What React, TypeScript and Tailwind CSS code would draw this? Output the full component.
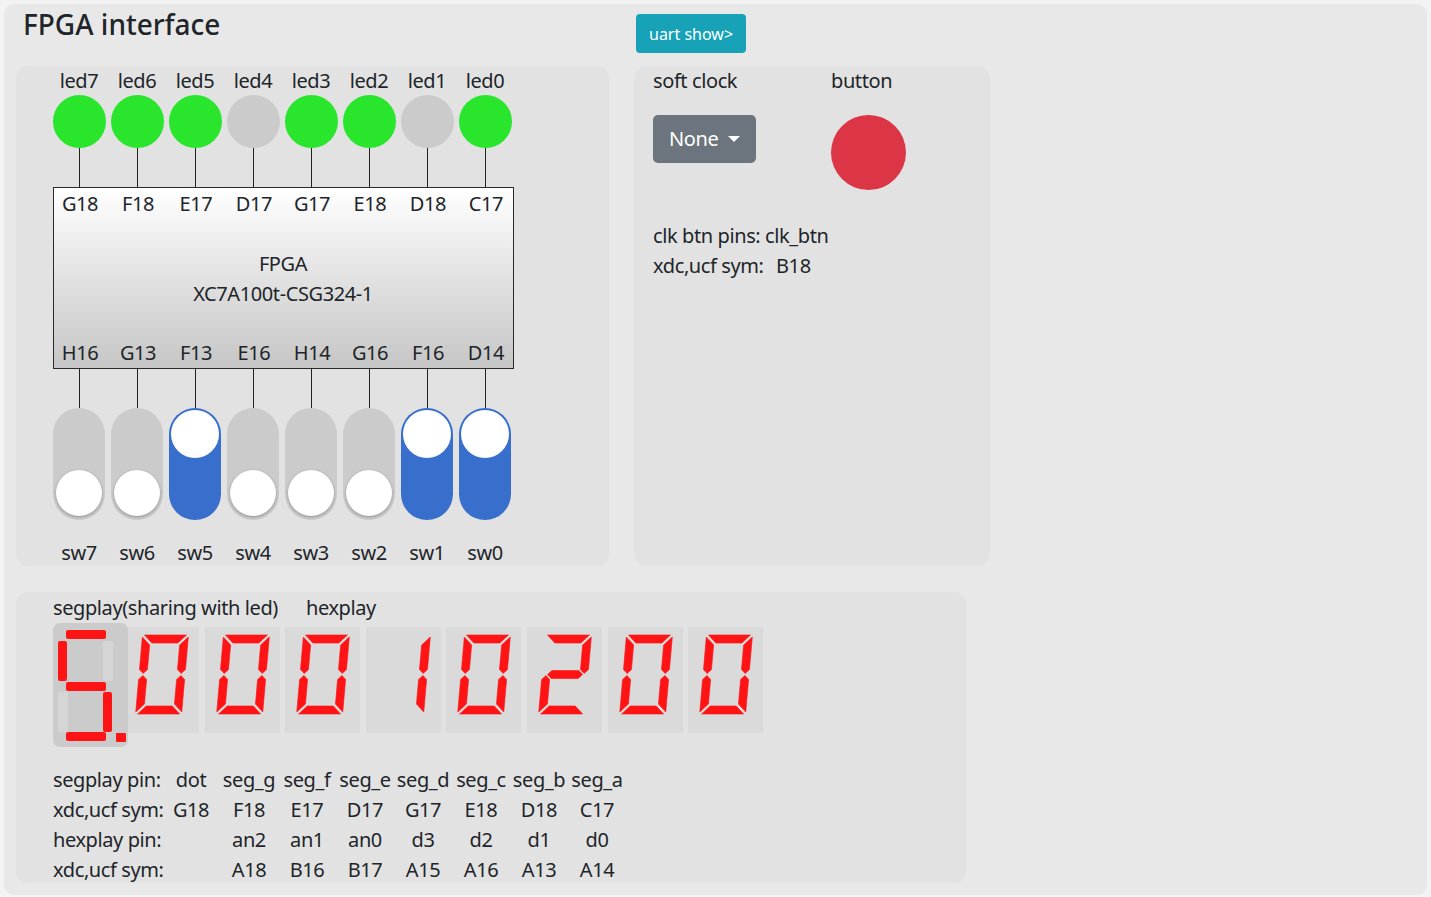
import React from 'react';

// led7 .. led0 / sw7 .. sw0, left to right as on the board
const LEDS = [1, 1, 1, 0, 1, 1, 0, 1];
const SWITCHES = [0, 0, 1, 0, 0, 0, 1, 1];
const TOP_PINS = ['G18', 'F18', 'E17', 'D17', 'G17', 'E18', 'D18', 'C17'];
const BOTTOM_PINS = ['H16', 'G13', 'F13', 'E16', 'H14', 'G16', 'F16', 'D14'];
const HEX = '00010200';

const DIGIT_SEGS: Record<string, string> = {
  '0': 'abcdef',
  '1': 'bc',
  '2': 'abdeg',
};

const PIN_TABLE = [
  ['segplay pin:', 'dot', 'seg_g', 'seg_f', 'seg_e', 'seg_d', 'seg_c', 'seg_b', 'seg_a'],
  ['xdc,ucf sym:', 'G18', 'F18', 'E17', 'D17', 'G17', 'E18', 'D18', 'C17'],
  ['hexplay pin:', '', 'an2', 'an1', 'an0', 'd3', 'd2', 'd1', 'd0'],
  ['xdc,ucf sym:', '', 'A18', 'B16', 'B17', 'A15', 'A16', 'A13', 'A14'],
];

// upright segment outlines, skewed afterwards
const W = 46;
const H = 79;
const T = 8;
const M = H / 2;
const SEG_POINTS: Record<string, number[][]> = {
  a: [[2, 0], [W - 2, 0], [W - 2 - T, T], [2 + T, T]],
  d: [[2, H], [W - 2, H], [W - 2 - T, H - T], [2 + T, H - T]],
  f: [[0, 2], [T, 2 + T], [T, M - T / 2 - 1], [T / 2, M - 1], [0, M - T / 2 - 1]],
  e: [[0, H - 2], [T, H - 2 - T], [T, M + T / 2 + 1], [T / 2, M + 1], [0, M + T / 2 + 1]],
  b: [[W, 2], [W - T, 2 + T], [W - T, M - T / 2 - 1], [W - T / 2, M - 1], [W, M - T / 2 - 1]],
  c: [[W, H - 2], [W - T, H - 2 - T], [W - T, M + T / 2 + 1], [W - T / 2, M + 1], [W, M + T / 2 + 1]],
  g: [[T / 2 + 1.5, M], [T + 1.5, M - T / 2], [W - T - 1.5, M - T / 2], [W - T / 2 - 1.5, M], [W - T - 1.5, M + T / 2], [T + 1.5, M + T / 2]],
};

function HexDigit({ ch }: { ch: string }) {
  const on = DIGIT_SEGS[ch] ?? '';
  return (
    <div className="h-[106px] w-[75px] flex-none bg-[#dadada]">
      <svg width="75" height="106" viewBox="0 0 75 106">
        <g transform="translate(18.5 8) skewX(-5)" fill="#fe1414">
          {on.split('').map((s) => (
            <polygon key={s} points={SEG_POINTS[s].map((p) => p.join(',')).join(' ')} strokeLinejoin="round" stroke="#fe1414" strokeWidth="0.6" />
          ))}
        </g>
      </svg>
    </div>
  );
}

// the led-shared display: "5." with b and e dark
function SegplayDigit() {
  const red = '#fe1414';
  const off = '#d6d6d6';
  return (
    <div className="relative z-10 h-[124px] w-[75px] flex-none rounded-[7px] bg-[#cbcbcb]">
      <svg width="75" height="124" viewBox="0 0 75 124">
        <rect x="13" y="7" width="40" height="9" rx="2" fill={red} />
        <rect x="5" y="18" width="9" height="40" rx="2" fill={red} />
        <rect x="50" y="18" width="10" height="40" rx="2" fill={off} />
        <rect x="13" y="59" width="40" height="9" rx="2" fill={red} />
        <rect x="5" y="69" width="10" height="40" rx="2" fill={off} />
        <rect x="50" y="69" width="9" height="40" rx="2" fill={red} />
        <rect x="13" y="109" width="40" height="9" rx="2" fill={red} />
        <rect x="63" y="110" width="10" height="9" rx="1" fill={red} />
      </svg>
    </div>
  );
}

function Wires() {
  return (
    <div className="grid h-[39px] grid-cols-[repeat(8,58px)]">
      {LEDS.map((_, i) => (
        <div key={i} className="flex justify-center">
          <div className="h-full w-px bg-[#222]" />
        </div>
      ))}
    </div>
  );
}

function BoardPanel() {
  return (
    <div className="h-[500px] rounded-[12px] bg-[#e2e2e2] pl-[34px]">
      <div className="w-[464px]">
        <div className="grid h-[29px] grid-cols-[repeat(8,58px)] text-center leading-[29px]">
          {LEDS.map((_, i) => (
            <span key={i}>led{7 - i}</span>
          ))}
        </div>
        <div className="grid h-[53px] grid-cols-[repeat(8,58px)]">
          {LEDS.map((on, i) => (
            <div key={i} className="flex justify-center">
              <div className={`size-[53px] rounded-full ${on ? 'bg-[#29e52c]' : 'bg-[#cbcbcb]'}`} />
            </div>
          ))}
        </div>
        <Wires />
        <div className="ml-[3px] flex h-[182px] w-[461px] flex-col justify-between border border-[#2a2a2a] bg-gradient-to-b from-white to-[#c6c6c6] pt-px">
          <div className="-ml-[3px] grid h-[30px] grid-cols-[repeat(8,58px)] text-center leading-[30px]">
            {TOP_PINS.map((p) => (
              <span key={p}>{p}</span>
            ))}
          </div>
          <div className="-ml-[3px] w-[464px] text-center leading-[30px]">
            <div>FPGA</div>
            <div>XC7A100t-CSG324-1</div>
          </div>
          <div className="-ml-[3px] grid h-[30px] grid-cols-[repeat(8,58px)] pb-px text-center leading-[30px]">
            {BOTTOM_PINS.map((p) => (
              <span key={p}>{p}</span>
            ))}
          </div>
        </div>
        <Wires />
        <div className="grid h-[112px] grid-cols-[repeat(8,58px)]">
          {SWITCHES.map((on, i) => (
            <div key={i} className="flex justify-center">
              {on ? (
                <div className="flex h-[112px] w-[52px] flex-col justify-start rounded-full bg-[#386fcc] p-[2px]">
                  <div className="size-[48px] rounded-full bg-white" />
                </div>
              ) : (
                <div className="flex h-[112px] w-[52px] flex-col justify-end rounded-full bg-[#cbcbcb] px-[3px] pb-[4px]">
                  <div className="size-[46px] rounded-full bg-white shadow-[0_1px_3px_rgba(0,0,0,0.3)]" />
                </div>
              )}
            </div>
          ))}
        </div>
        <div className="mt-[18px] grid h-[30px] grid-cols-[repeat(8,58px)] text-center leading-[30px]">
          {SWITCHES.map((_, i) => (
            <span key={i}>sw{7 - i}</span>
          ))}
        </div>
      </div>
    </div>
  );
}

function ClockPanel() {
  return (
    <div className="h-[500px] rounded-[12px] bg-[#e2e2e2] pl-[19px]">
      <div className="grid grid-cols-[178px_1fr]">
        <div className="h-[29px] leading-[29px]">soft clock</div>
        <div className="h-[29px] leading-[29px]">button</div>
        <div className="pt-[20px]">
          <button className="flex h-[48px] items-center rounded-[5px] bg-[#6c757d] pl-[16px] pr-[16px] text-white">
            None
            <span className="ml-[10px] h-0 w-0 border-x-[6px] border-t-[6px] border-x-transparent border-t-white" />
          </button>
        </div>
        <div className="pt-[20px]">
          <div className="size-[75px] rounded-full bg-[#dc3545]" />
        </div>
      </div>
      <div className="mt-[31px] leading-[30px]">
        <div>clk btn pins: clk_btn</div>
        <div>
          <span className="inline-block w-[123px]">xdc,ucf sym:</span>B18
        </div>
      </div>
    </div>
  );
}

function DisplayPanel() {
  return (
    <div className="mt-[26px] h-[291px] w-[950px] rounded-[12px] bg-[#e2e2e2] pl-[37px] pt-px">
      <div className="h-[30px] leading-[30px]">
        <span className="inline-block w-[253px]">segplay(sharing with led)</span>
        <span>hexplay</span>
      </div>
      <div className="flex items-start">
        <SegplayDigit />
        <div className="-ml-[4px] mt-[4px] flex gap-[5.6px]">
          {HEX.split('').map((c, i) => (
            <HexDigit key={i} ch={c} />
          ))}
        </div>
      </div>
      <div className="mt-[18px] leading-[30px]">
        {PIN_TABLE.map((row, r) => (
          <div key={r} className="grid h-[30px] grid-cols-[109px_repeat(8,58px)]">
            {row.map((cell, c) => (
              <span key={c} className={c === 0 ? 'whitespace-nowrap' : 'text-center'}>
                {cell}
              </span>
            ))}
          </div>
        ))}
      </div>
    </div>
  );
}

export default function App() {
  return (
    <div className="h-[897px] bg-[#f3f3f3] p-[4px] font-['Noto_Sans',sans-serif] text-[20px] tracking-[-0.4px] text-[#212529]">
      <div className="h-[891px] rounded-[10px] bg-[#e8e8e8] px-[12px]">
        <div className="grid h-[62px] grid-cols-[593px_356px] gap-x-[25px]">
          <h1 className="pl-[7px] pt-[3px] text-[28px] font-medium leading-[34px] tracking-[0px]">FPGA interface</h1>
          <div className="pl-[2px] pt-[10px]">
            <button className="h-[39px] rounded-[4px] bg-[#17a2b8] px-[13px] text-[16px] tracking-[0px] text-white">uart show&gt;</button>
          </div>
        </div>
        <div className="grid grid-cols-[593px_356px] gap-x-[25px]">
          <BoardPanel />
          <ClockPanel />
        </div>
        <DisplayPanel />
      </div>
    </div>
  );
}
